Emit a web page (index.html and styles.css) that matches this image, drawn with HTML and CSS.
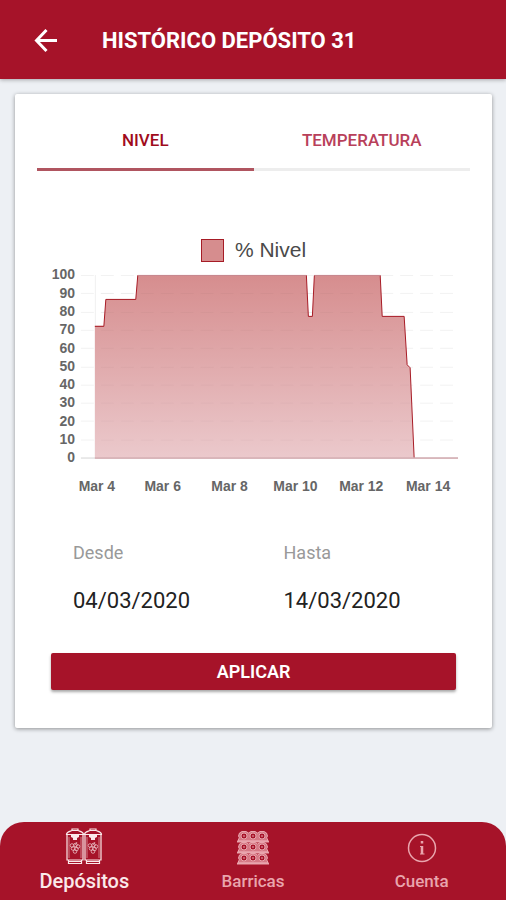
FILE: index.html
```html
<!DOCTYPE html>
<html lang="es">
<head>
    <meta charset="UTF-8">
    <meta name="viewport" content="width=device-width, initial-scale=1.0">
    <title>Histórico depósito 31</title>
    <link rel="stylesheet" href="styles.css">
</head>
<body>
    <header class="header">
        <button type="button" class="back-button" aria-label="Volver">
            <svg width="24" height="24" viewBox="0 0 24 24" fill="none" stroke="currentColor" stroke-width="3">
                <path d="M23 11.500H3M12.500 1L2.500 11.500L12.500 22"/>
            </svg>
        </button>
        <h1 class="title">HISTÓRICO DEPÓSITO 31</h1>
    </header>

    <main class="content">
        <section class="card">
            <div class="tabs" role="tablist">
                <button type="button" class="tab active" role="tab" aria-selected="true">NIVEL</button>
                <button type="button" class="tab" role="tab" aria-selected="false">TEMPERATURA</button>
            </div>

            <div class="legend"><span class="legend-box"></span>% Nivel</div>
            <svg class="chart" viewBox="0 0 434 236" role="img" aria-label="% Nivel">
                <defs>
                    <linearGradient id="fill" x1="0" y1="0" x2="0" y2="1">
                        <stop offset="0" stop-color="#d68d8e"/>
                        <stop offset="1" stop-color="#ebc9cc"/>
                    </linearGradient>
                </defs>
                <path class="axis" d="M58.500 11V194"/>
                <path class="axis zero" d="M44 194.500H422"/>
                <path class="grid" d="M44 11.500H422M44 29.500H422M44 48.500H422M44 66.500H422M44 84.500H422M44 103.500H422M44 121.500H422M44 139.500H422M44 157.500H422M44 176.500H422"/>
                <path fill="url(#fill)" d="M58 62H67L69 35H99L101 11H270L272 52H276L278 11H344L346 52H368L371 101L374 104L378 194H58Z"/>
                <path class="grid over" d="M64 29.500H344M64 48.500H344M64 66.500H368M64 84.500H368M64 103.500H372M64 121.500H373M64 139.500H374M64 157.500H375M64 176.500H376"/>
                <path class="line" d="M58 62.500H67L69 35.500H99L101 11.500H270L272 52.500H276L278 11.500H344L346 52.500H368L371 101L374 104L378 194"/>
                <path class="line base" d="M101 11.500H270M278 11.500H344M58 194.500H422"/>
                <g class="labels y-labels">
                    <text x="38" y="15">100</text>
                    <text x="38" y="34">90</text>
                    <text x="38" y="52">80</text>
                    <text x="38" y="70">70</text>
                    <text x="38" y="89">60</text>
                    <text x="38" y="107">50</text>
                    <text x="38" y="125">40</text>
                    <text x="38" y="143">30</text>
                    <text x="38" y="162">20</text>
                    <text x="38" y="180">10</text>
                    <text x="38" y="198">0</text>
                </g>
                <g class="labels x-labels">
                    <text x="60" y="228">Mar 4</text>
                    <text x="126" y="228">Mar 6</text>
                    <text x="193" y="228">Mar 8</text>
                    <text x="259" y="228">Mar 10</text>
                    <text x="325" y="228">Mar 12</text>
                    <text x="392" y="228">Mar 14</text>
                </g>
            </svg>

            <form class="filter">
                <div class="dates">
                    <div class="field">
                        <label for="desde">Desde</label>
                        <input type="text" id="desde" value="04/03/2020">
                    </div>
                    <div class="field">
                        <label for="hasta">Hasta</label>
                        <input type="text" id="hasta" value="14/03/2020">
                    </div>
                </div>
                <button type="button" class="apply-button">APLICAR</button>
            </form>
        </section>
    </main>

    <nav class="tab-bar">
        <a href="#depositos" class="nav-item selected">
            <svg width="38" height="38" viewBox="0 0 38 38" fill="none" stroke="currentColor">
                <g id="tank">
                    <path stroke-width="1.200" d="M2 7V32H18V7M1.500 6.500C1.500 4 5 3.500 7 2.500H13C15 3.500 18.500 4 18.500 6.500ZM3.500 32V35.500H16.500V32M7 2.500V1H13V2.500"/>
                    <path fill="currentColor" stroke="none" d="M6 7H14V9L12 10V12H8V10L6 9ZM4 33H16V34H4Z"/>
                    <path stroke-width="0.500" d="M4 9V30M16 9V30"/>
                    <g stroke-width="0.800" opacity="0.8">
                        <circle cx="7" cy="17.500" r="1.800"/><circle cx="10.500" cy="17" r="1.800"/><circle cx="13" cy="18.500" r="1.800"/>
                        <circle cx="8" cy="20.500" r="1.800"/><circle cx="11.500" cy="21" r="1.800"/><circle cx="10" cy="23.500" r="1.800"/>
                        <path d="M10 17L12 14"/>
                    </g>
                </g>
                <use href="#tank" x="18"/>
            </svg>
            Depósitos
        </a>
        <a href="#barricas" class="nav-item">
            <svg width="38" height="38" viewBox="0 0 38 38" fill="none" stroke="currentColor">
                <defs>
                    <g id="row">
                        <path fill="currentColor" fill-opacity="0.7" d="M4.500 11V9L5.500 8L4.500 6L5.500 3L8 1.500H12L14.500 3L17 1.500H21L23.500 3L26 1.500H30L32.500 3L33.500 6L32.500 8L33.500 9V11Z"/>
                        <path stroke-width="2" d="M3 11.500H35"/>
                        <g class="barrel">
                            <circle cx="10" cy="6" r="3"/><circle cx="19" cy="6" r="3"/><circle cx="28" cy="6" r="3"/>
                        </g>
                        <path d="M9 6H11M18 6H20M27 6H29"/>
                    </g>
                </defs>
                <use href="#row" y="2"/>
                <use href="#row" y="13"/>
                <use href="#row" y="24"/>
            </svg>
            Barricas
        </a>
        <a href="#cuenta" class="nav-item">
            <svg width="38" height="38" viewBox="0 0 38 38" fill="none" stroke="currentColor">
                <circle cx="19" cy="20" r="13.500" stroke-width="1.500"/>
                <path stroke-width="2.500" d="M19 18V26M19 13V15.500"/>
                <path stroke-width="1" d="M17 18.500H19M17 26H21.500"/>
            </svg>
            Cuenta
        </a>
    </nav>
</body>
</html>
```
FILE: styles.css
```css
* {
    box-sizing: border-box;
}
body {
    margin: 0;
    min-height: 100vh;
    display: flex;
    flex-direction: column;
    font-family: Roboto, sans-serif;
    background-color: #edf0f4;
}
button, input {
    font-family: inherit;
    border: none;
    background: none;
    padding: 0;
}
button {
    cursor: pointer;
}
.header {
    display: flex;
    align-items: center;
    gap: 44px;
    height: 79px;
    padding: 2px 34px 0;
    background-color: #a61329;
    color: #fff;
    box-shadow: 0 1px 4px rgba(0, 0, 0, 0.3);
}
.back-button {
    display: flex;
    color: inherit;
}
.title {
    margin: 0;
    font-size: 22px;
    font-weight: 700;
}
.content {
    flex: 1;
    padding: 15px 14px 15px 15px;
}
.card {
    padding: 16px 22px 38px;
    border-radius: 2px;
    background-color: #fff;
    box-shadow: 0 1px 4px rgba(0, 0, 0, 0.4);
}
.tabs {
    display: flex;
}
.tab {
    flex: 1;
    height: 61px;
    padding-top: 2px;
    border-bottom: 3px solid #ededed;
    color: #b8405a;
    font-size: 17px;
    font-weight: 500;
}
.tab.active {
    border-color: #b05560;
    color: #a00c1c;
}
.legend {
    display: flex;
    justify-content: center;
    align-items: center;
    gap: 11px;
    margin-top: 67px;
    color: #4a4a4a;
    font-family: "Liberation Sans", Arial, sans-serif;
    font-size: 21px;
    line-height: 24px;
}
.legend-box {
    width: 23px;
    height: 23px;
    border: 1px solid #a61c26;
    background-color: #d68d8e;
}
.chart {
    display: block;
    width: 100%;
    margin-top: 2px;
}
.axis {
    stroke: #f0f0f0;
}
.axis.zero {
    stroke: #d4d4d4;
}
.grid {
    stroke: #f2f2f2;
    stroke-dasharray: 13 7;
}
.grid.over {
    stroke: rgba(0, 0, 0, 0.03);
}
.line {
    fill: none;
    stroke: #a81c26;
    stroke-linejoin: round;
}
.line.base {
    stroke: #c98c94;
}
.labels {
    fill: #666;
    font-family: "Liberation Sans", Arial, sans-serif;
    font-size: 14px;
    font-weight: bold;
}
.y-labels {
    text-anchor: end;
}
.x-labels {
    text-anchor: middle;
}
.filter {
    margin-top: 43px;
    padding: 0 14px;
}
.dates {
    display: flex;
    gap: 38px;
    padding-left: 22px;
}
.field {
    flex: 1;
    min-width: 0;
}
.field label {
    display: block;
    color: #999;
    font-size: 18px;
    line-height: 22px;
}
.field input {
    width: 100%;
    height: 30px;
    margin-top: 21px;
    color: #222;
    font-size: 22px;
}
.apply-button {
    display: block;
    width: 100%;
    height: 37px;
    margin-top: 38px;
    border-radius: 2px;
    background-color: #a61329;
    color: #fff;
    font-size: 18px;
    font-weight: 600;
    box-shadow: 0 2px 3px rgba(0, 0, 0, 0.35);
}
.tab-bar {
    display: flex;
    height: 78px;
    border-radius: 24px 24px 0 0;
    background-color: #a61329;
}
.nav-item {
    flex: 1;
    display: flex;
    flex-direction: column;
    align-items: center;
    gap: 3px;
    padding-top: 6px;
    color: #e9a5ad;
    font-size: 17px;
    font-weight: 500;
    line-height: 24px;
    text-decoration: none;
}
.nav-item.selected {
    color: #fbe9ea;
    font-size: 20px;
}
.barrel {
    fill: #a61329;
}
```
